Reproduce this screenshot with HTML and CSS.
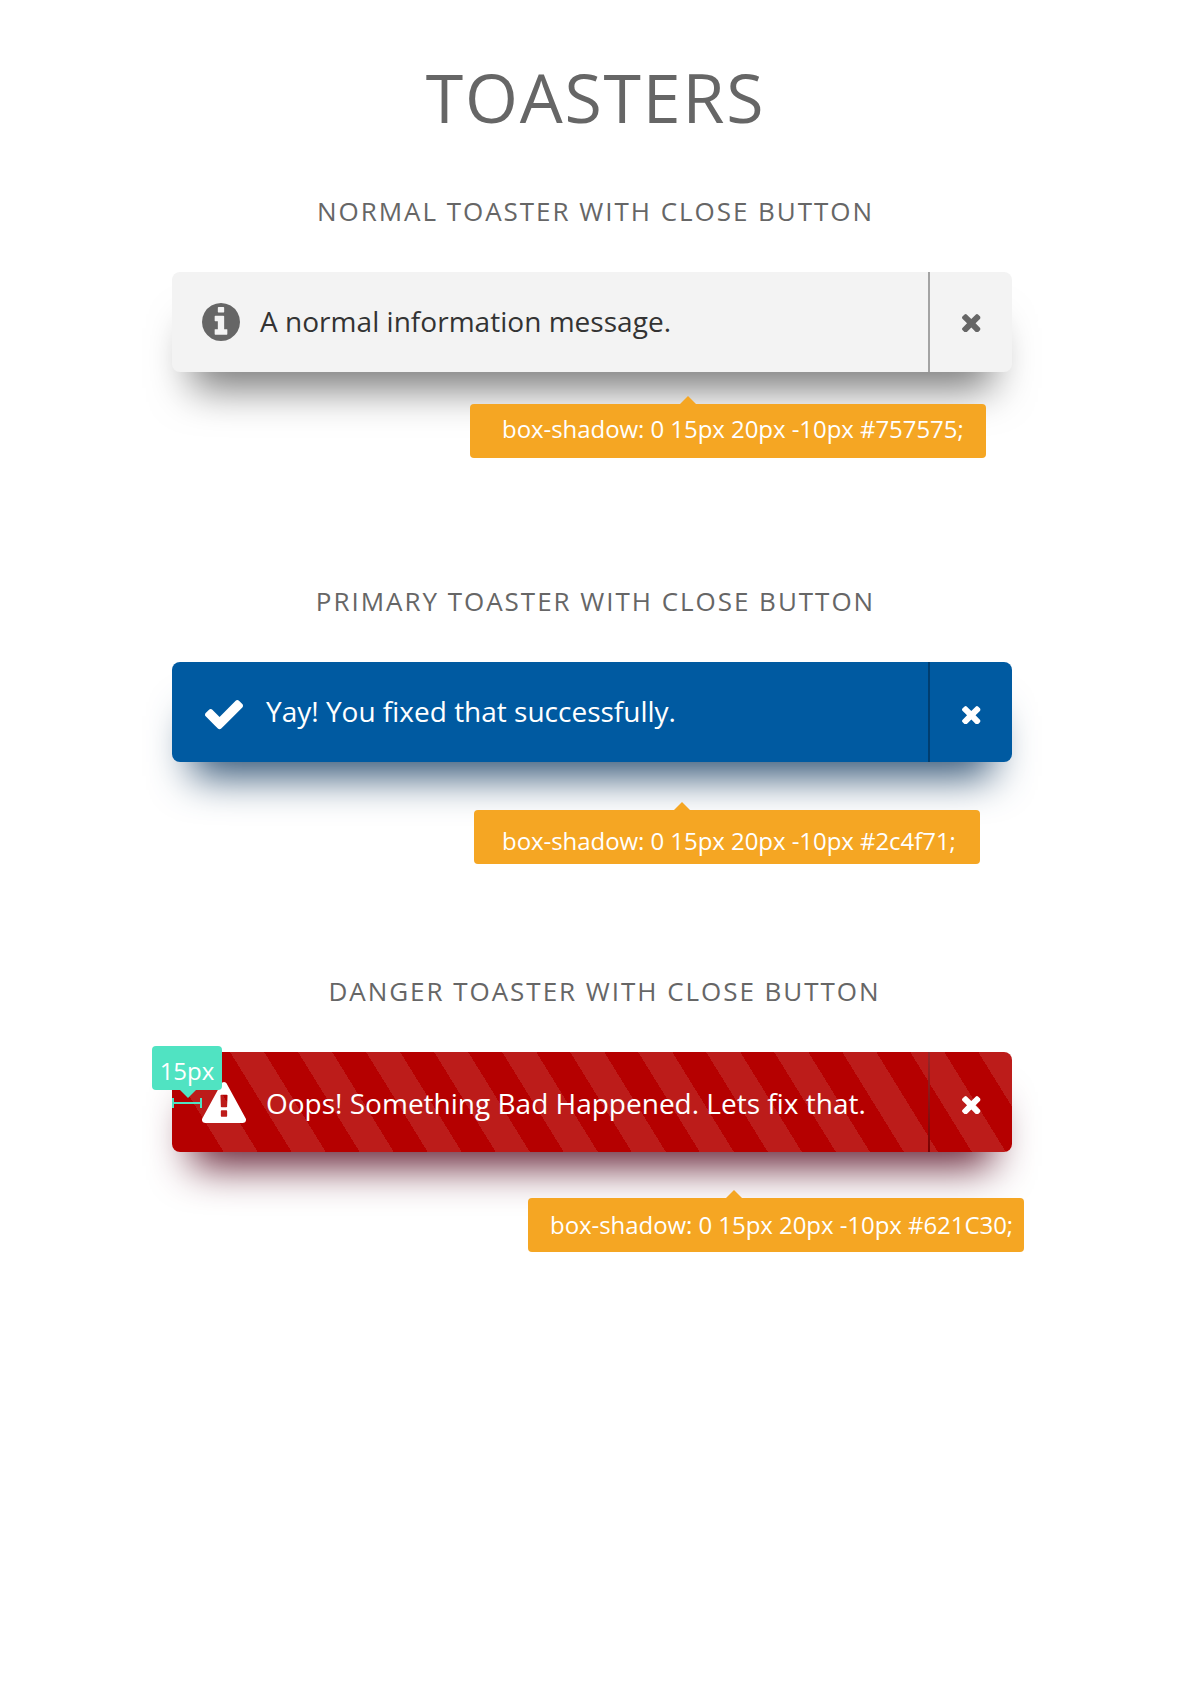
FILE: index.html
```html
<!DOCTYPE html>
<html lang="en">
<head>
<meta charset="utf-8">
<title>Toasters</title>
<link rel="stylesheet" href="styles.css">
</head>
<body>
<svg class="sprite" aria-hidden="true">
  <symbol id="times" viewBox="302 366 1188 1188"><path d="M1490 1322q0 40-28 68l-136 136q-28 28-68 28t-68-28l-294-294-294 294q-28 28-68 28t-68-28l-136-136q-28-28-28-68t28-68l294-294-294-294q-28-28-28-68t28-68l136-136q28-28 68-28t68 28l294 294 294-294q28-28 68-28t68 28l136 136q28 28 28 68t-28 68l-294 294 294 294q28 28 28 68z"/></symbol>
</svg>
<main class="page">
  <h1 class="title">TOASTERS</h1>

  <section class="sample">
    <h2 class="heading">NORMAL TOASTER WITH CLOSE BUTTON</h2>
    <div class="toaster toaster-normal">
      <div class="body">
        <svg class="icon icon-info" viewBox="128 128 1536 1536"><path d="M1152 1376v-160q0-14-9-23t-23-9h-96v-512q0-14-9-23t-23-9h-320q-14 0-23 9t-9 23v160q0 14 9 23t23 9h96v320h-96q-14 0-23 9t-9 23v160q0 14 9 23t23 9h448q14 0 23-9t9-23zm-128-896v-160q0-14-9-23t-23-9h-192q-14 0-23 9t-9 23v160q0 14 9 23t23 9h192q14 0 23-9t9-23zm640 416q0 209-103 385.5t-279.5 279.5-385.5 103-385.5-103-279.5-279.5-103-385.5 103-385.5 279.5-279.5 385.5-103 385.5 103 279.5 279.5 103 385.5z"/></svg>
        <span class="message">A normal information message.</span>
      </div>
      <button class="close" aria-label="Close"><svg class="times"><use href="#times"/></svg></button>
      <div class="note note-normal">box-shadow: 0 15px 20px -10px #757575;</div>
    </div>
  </section>

  <section class="sample">
    <h2 class="heading">PRIMARY TOASTER WITH CLOSE BUTTON</h2>
    <div class="toaster toaster-primary">
      <div class="body">
        <svg class="icon icon-check" viewBox="121 334 1550 1188"><path d="M1671 566q0 40-28 68l-724 724-136 136q-28 28-68 28t-68-28l-136-136-362-362q-28-28-28-68t28-68l136-136q28-28 68-28t68 28l294 295 656-657q28-28 68-28t68 28l136 136q28 28 28 68z"/></svg>
        <span class="message">Yay! You fixed that successfully.</span>
      </div>
      <button class="close" aria-label="Close"><svg class="times"><use href="#times"/></svg></button>
      <div class="note note-primary">box-shadow: 0 15px 20px -10px #2c4f71;</div>
    </div>
  </section>

  <section class="sample">
    <h2 class="heading heading-danger">DANGER TOASTER WITH CLOSE BUTTON</h2>
    <div class="toaster toaster-danger">
      <div class="body">
        <svg class="icon icon-warning" viewBox="0 0 1792 1664"><path d="M1024 1375v-190q0-14-9.5-23.5t-22.5-9.5h-192q-13 0-22.5 9.5t-9.5 23.5v190q0 14 9.5 23.5t22.5 9.5h192q13 0 22.5-9.5t9.5-23.5zm-2-374l18-459q0-12-10-19-13-11-24-11h-220q-11 0-24 11-10 7-10 21l17 457q0 10 10 16.5t24 6.5h185q14 0 23.5-6.5t10.5-16.5zm-14-934l768 1408q35 63-2 126-17 29-46.5 46t-63.5 17h-1536q-34 0-63.5-17t-46.5-46q-37-63-2-126l768-1408q17-31 47-49t65-18 65 18 47 49z"/></svg>
        <span class="message">Oops! Something Bad Happened. Lets fix that.</span>
      </div>
      <button class="close" aria-label="Close"><svg class="times"><use href="#times"/></svg></button>
      <div class="note note-danger">box-shadow: 0 15px 20px -10px #621C30;</div>
      <div class="measure">15px</div>
      <div class="ruler"></div>
    </div>
  </section>
</main>
</body>
</html>
```
FILE: styles.css
```css
* { box-sizing: border-box; }

body {
  margin: 0;
  background: #fff;
  font-family: "Open Sans", "Noto Sans", sans-serif;
  color: #666;
}

.sprite { display: none; }

.page {
  width: 1190px;
  min-height: 1684px;
  padding-top: 50px;
}

.title {
  height: 94px;
  margin: 0;
  padding-left: 1px;
  line-height: 94px;
  font-size: 68px;
  font-weight: 400;
  letter-spacing: 1.8px;
  text-align: center;
}

.sample { height: 390px; padding-top: 47px; }

.heading {
  height: 40px;
  margin: 0 0 41px;
  padding-left: 1px;
  line-height: 40px;
  font-size: 26px;
  font-weight: 400;
  letter-spacing: 1.97px;
  text-align: center;
  white-space: nowrap;
}

.heading-danger { padding-left: 19px; }

.toaster {
  position: relative;
  display: flex;
  width: 840px;
  height: 100px;
  margin-left: 172px;
  border-radius: 8px;
}

.body {
  display: flex;
  flex: 1;
  align-items: center;
  padding-left: 30px;
}

.message {
  padding-bottom: 2px;
  font-size: 28px;
  line-height: 40px;
  white-space: nowrap;
}

.icon { display: block; flex: none; fill: currentColor; }

.close {
  display: flex;
  align-items: center;
  width: 84px;
  padding: 0 0 0 32px;
  border: 0;
  border-left: 2px solid rgba(0, 0, 0, .3);
  background: none;
  color: inherit;
}

.times { width: 18.6px; height: 18.6px; fill: currentColor; margin-top: 6px; }

.toaster-normal {
  background: #f3f3f3;
  box-shadow: 0 36px 42px -20px #757575;
}
.toaster-normal .message { margin-left: 20px; color: #333; letter-spacing: .03px; }
.toaster-normal .close { border-color: #a3a3a3; color: #666; }
.toaster-normal .times { margin-top: 2px; }
.icon-info { width: 38px; height: 38px; }

.toaster-primary {
  background: #005aa1;
  box-shadow: 0 34px 42px -20px #2c4f71;
  color: #fff;
}
.icon-check { width: 38px; height: 29.3px; margin: 6px 0 0 3px; }
.toaster-primary .message { margin-left: 23px; }

.toaster-danger {
  background:
    linear-gradient(58.35deg, #b50000 44px, transparent 44px),
    repeating-linear-gradient(58.35deg, #bc1c1a 0 15.1px, #b50000 15.1px 44px, #bc1c1a 44px 57.9px);
  box-shadow: 0 34px 42px -20px #621c30;
  color: #fff;
}
.toaster-danger .close {
  border-image: linear-gradient(#96282a, #7c0000) 1;
}
.icon-warning { width: 44px; height: 41px; }
.toaster-danger .message { margin: 4px 0 0 20px; }

.note {
  position: absolute;
  height: 54px;
  border-radius: 4px;
  background: #f5a623;
  color: #fff;
  font-size: 24px;
  line-height: 50px;
  letter-spacing: -.055px;
  white-space: nowrap;
}

.note::before {
  content: "";
  position: absolute;
  top: -8px;
  border: 8px solid transparent;
  border-top: 0;
  border-bottom-color: #f5a623;
}

.note-normal { top: 132px; left: 298px; width: 516px; padding-left: 32px; }
.note-normal::before { left: 210px; }
.note-primary { top: 148px; left: 302px; width: 506px; padding-left: 28px; line-height: 62px; }
.note-primary::before { left: 200px; }
.note-danger { top: 146px; left: 356px; width: 496px; padding-left: 22px; line-height: 54px; }
.note-danger::before { left: 198px; }

.measure {
  position: absolute;
  top: -6px;
  left: -20px;
  width: 70px;
  height: 44px;
  border-radius: 4px;
  background: #50e3c2;
  font-size: 24px;
  line-height: 50px;
  text-align: center;
}

.measure::after {
  content: "";
  position: absolute;
  top: 44px;
  left: 28px;
  border: 8px solid transparent;
  border-bottom: 0;
  border-top-color: #50e3c2;
}

/* Horizontal bar with an end stop on each side */
.ruler {
  position: absolute;
  top: 46px;
  left: 0;
  width: 30px;
  height: 10px;
  border: solid #50e3c2;
  border-width: 0 2px;
  background: linear-gradient(#50e3c2, #50e3c2) 0 4px / 100% 2px no-repeat;
}
```
